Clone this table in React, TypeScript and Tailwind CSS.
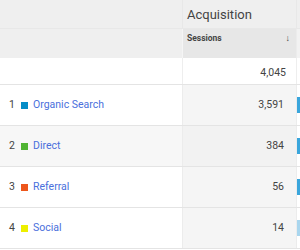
const rows = [
  { n: 1, color: "bg-[#058dc7]", label: "Organic Search", value: "3,591", leftBg: "bg-white", rightBg: "bg-[#f5f5f5]", bar: "bg-[#3aa6dc]" },
  { n: 2, color: "bg-[#50b432]", label: "Direct", value: "384", leftBg: "bg-[#f7f7f7]", rightBg: "bg-[#f2f2f2]", bar: "bg-[#3aa6dc]" },
  { n: 3, color: "bg-[#ed561b]", label: "Referral", value: "56", leftBg: "bg-white", rightBg: "bg-[#f5f5f5]", bar: "bg-[#3aa6dc]" },
  { n: 4, color: "bg-[#edef00]", label: "Social", value: "14", leftBg: "bg-white", rightBg: "bg-[#f5f5f5]", bar: "bg-[#a9d6ee]" },
];

export default function App() {
  return (
    <div className="w-[300px] h-[250px] overflow-hidden bg-white text-[#444] font-['Roboto',sans-serif]">
      {/* header row 1 */}
      <div className="flex h-[29px] bg-[#efefef] border-b border-[#e8e8e8]">
        <div className="w-[183px] border-r border-[#e8e8e8]" />
        <div className="w-[114px] pl-[4px] pt-[7px] text-[13px] leading-[16px] text-[#444] border-r border-[#e8e8e8]">
          Acquisition
        </div>
        <div className="flex-1" />
      </div>
      {/* header row 2 */}
      <div className="flex h-[29px] bg-[#efefef]">
        <div className="w-[183px] border-r border-[#f5f5f5]" />
        <div className="w-[114px] bg-[#e7e7e7] flex justify-between pl-[4px] pr-[6px] pt-[4px] text-[8.5px] leading-[10px] font-bold text-[#444] border-r border-[#ececec]">
          <span>Sessions</span>
          <span className="text-[9px] font-black">↓</span>
        </div>
        <div className="flex-1 bg-[#f2f2f2]" />
      </div>
      {/* totals */}
      <div className="flex h-[27px] bg-white border-b border-[#e4e4e4]">
        <div className="w-[183px] border-r border-[#eeeeee]" />
        <div className="w-[114px] flex items-end justify-end pr-[10px] pb-[5px] text-[10.5px] leading-[12px] text-[#444] border-r border-[#eeeeee]">
          4,045
        </div>
        <div className="flex-1" />
      </div>
      {rows.map((r) => (
        <div key={r.n} className="flex h-[41px] border-b border-[#e4e4e4]">
          <div className={`w-[183px] ${r.leftBg} flex items-center pl-[9px] text-[10.5px] leading-[12px]`}>
            <span className="text-[#444] w-[12px]">{r.n}</span>
            <span className={`w-[7px] h-[7px] ${r.color}`} />
            <span className="ml-[5px] text-[#4a6fdc]">{r.label}</span>
          </div>
          <div className={`w-[114px] ${r.rightBg} flex items-center justify-end pr-[12px] text-[10.5px] leading-[12px] text-[#444] border-l border-[#ececec]`}>
            {r.value}
          </div>
          <div className="flex-1 bg-white flex items-center border-l border-[#ececec]">
            <div className={`w-[3px] h-[16px] ${r.bar}`} />
          </div>
        </div>
      ))}
    </div>
  );
}
